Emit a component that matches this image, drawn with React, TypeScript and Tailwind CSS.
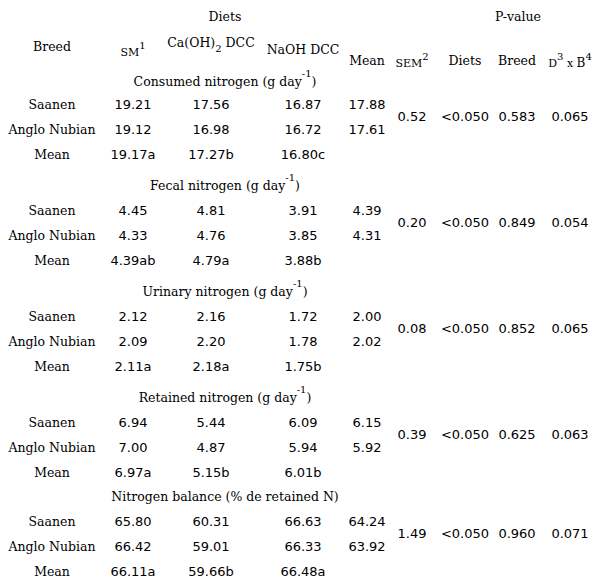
import type { ReactNode } from 'react';

const GRID = 'grid grid-cols-[104px_58px_98px_86px_42px_48px_58px_46px_60px]';
const SERIF = "font-['DejaVu_Serif',serif] text-[12.5px] leading-[16px]";
const SANS = "font-['DejaVu_Sans',sans-serif] text-[13px] leading-[16px]";

type Section = {
  title: ReactNode;
  tall: boolean;
  saanen: string[];
  nubian: string[];
  mean: string[];
  stats: string[];
};

const PerDay = () => (
  <>
    (g day<sup className="text-[10px] top-[-9px]">-1</sup>)
  </>
);

const SECTIONS: Section[] = [
  {
    title: (
      <>
        Consumed nitrogen <PerDay />
      </>
    ),
    tall: true,
    saanen: ['19.21', '17.56', '16.87', '17.88'],
    nubian: ['19.12', '16.98', '16.72', '17.61'],
    mean: ['19.17a', '17.27b', '16.80c'],
    stats: ['0.52', '<0.050', '0.583', '0.065'],
  },
  {
    title: (
      <>
        Fecal nitrogen <PerDay />
      </>
    ),
    tall: true,
    saanen: ['4.45', '4.81', '3.91', '4.39'],
    nubian: ['4.33', '4.76', '3.85', '4.31'],
    mean: ['4.39ab', '4.79a', '3.88b'],
    stats: ['0.20', '<0.050', '0.849', '0.054'],
  },
  {
    title: (
      <>
        Urinary nitrogen <PerDay />
      </>
    ),
    tall: true,
    saanen: ['2.12', '2.16', '1.72', '2.00'],
    nubian: ['2.09', '2.20', '1.78', '2.02'],
    mean: ['2.11a', '2.18a', '1.75b'],
    stats: ['0.08', '<0.050', '0.852', '0.065'],
  },
  {
    title: (
      <>
        Retained nitrogen <PerDay />
      </>
    ),
    tall: true,
    saanen: ['6.94', '5.44', '6.09', '6.15'],
    nubian: ['7.00', '4.87', '5.94', '5.92'],
    mean: ['6.97a', '5.15b', '6.01b'],
    stats: ['0.39', '<0.050', '0.625', '0.063'],
  },
  {
    title: 'Nitrogen balance (% de retained N)',
    tall: false,
    saanen: ['65.80', '60.31', '66.63', '64.24'],
    nubian: ['66.42', '59.01', '66.33', '63.92'],
    mean: ['66.11a', '59.66b', '66.48a'],
    stats: ['1.49', '<0.050', '0.960', '0.071'],
  },
];

function Block({ section, index }: { section: Section; index: number }) {
  return (
    <>
      {/* first title sits inside the header block */}
      {index > 0 && (
        <div className={`${GRID} ${section.tall ? 'h-[31px] pt-[11px]' : 'h-[24px] pt-[4px]'}`}>
          <div className={`col-start-2 col-span-3 text-center whitespace-nowrap ${SERIF}`}>{section.title}</div>
        </div>
      )}
      <div className={`${GRID} grid-rows-[25px_25px_25px]`}>
        <div className={`flex items-center justify-center ${SERIF}`}>Saanen</div>
        {section.saanen.map((v, i) => (
          <div key={i} className={`flex items-center justify-center ${SANS}`}>
            {v}
          </div>
        ))}
        <div className={`row-span-2 col-start-6 flex items-center justify-center ${SANS}`}>{section.stats[0]}</div>
        <div className={`row-span-2 flex items-center justify-center ${SANS}`}>{section.stats[1]}</div>
        <div className={`row-span-2 flex items-center justify-center ${SANS}`}>{section.stats[2]}</div>
        <div className={`row-span-2 flex items-center justify-center ${SANS}`}>{section.stats[3]}</div>

        <div className={`col-start-1 flex items-center justify-center whitespace-nowrap ${SERIF}`}>Anglo Nubian</div>
        {section.nubian.map((v, i) => (
          <div key={i} className={`flex items-center justify-center ${SANS}`}>
            {v}
          </div>
        ))}

        <div className={`col-start-1 flex items-center justify-center ${SERIF}`}>Mean</div>
        {section.mean.map((v, i) => (
          <div key={i} className={`flex items-center justify-center ${SANS}`}>
            {v}
          </div>
        ))}
      </div>
    </>
  );
}

export default function App() {
  return (
    <div className="w-[604px] h-[588px] overflow-hidden bg-white text-black">
      <div className={`${GRID} h-[34px] items-center`}>
        <div className={`col-start-2 col-span-3 text-center ${SERIF}`}>Diets</div>
        <div className={`col-start-7 col-span-3 text-center ${SERIF}`}>P-value</div>
      </div>

      {/* column heads + first section title */}
      <div className={`${GRID} h-[58px] items-start`}>
        <div className={`mt-[5px] text-center ${SERIF}`}>Breed</div>
        <div className={`mt-[10px] text-center ${SERIF}`}>
          <span className="text-[11px]">SM</span>
          <sup className="text-[10px] top-[-7px]">1</sup>
        </div>
        <div className={`mt-[0.5px] text-center whitespace-nowrap ${SERIF}`}>
          Ca(OH)<sub className="text-[10px] bottom-[-5px]">2</sub> DCC
        </div>
        <div className={`mt-[7.5px] text-center whitespace-nowrap ${SERIF}`}>NaOH DCC</div>
        <div className={`mt-[18.5px] text-center ${SERIF}`}>Mean</div>
        <div className={`mt-[21px] text-center whitespace-nowrap ${SERIF}`}>
          <span className="text-[11px]">SEM</span>
          <sup className="text-[10px] top-[-7px]">2</sup>
        </div>
        <div className={`mt-[18.5px] text-center ${SERIF}`}>Diets</div>
        <div className={`mt-[18.5px] text-center ${SERIF}`}>Breed</div>
        <div className={`mt-[21px] text-center whitespace-nowrap ${SERIF}`}>
          <span className="text-[11px]">D</span>
          <sup className="text-[10px] top-[-7px]">3</sup>
          <span className="text-[11px]"> x </span>
          <span className="text-[12px]">B</span>
          <sup className="text-[10px] top-[-7px]">4</sup>
        </div>
        <div className={`col-start-2 col-span-3 -mt-[1px] text-center whitespace-nowrap ${SERIF}`}>
          {SECTIONS[0].title}
        </div>
      </div>

      {SECTIONS.map((s, i) => (
        <Block key={i} section={s} index={i} />
      ))}
    </div>
  );
}
